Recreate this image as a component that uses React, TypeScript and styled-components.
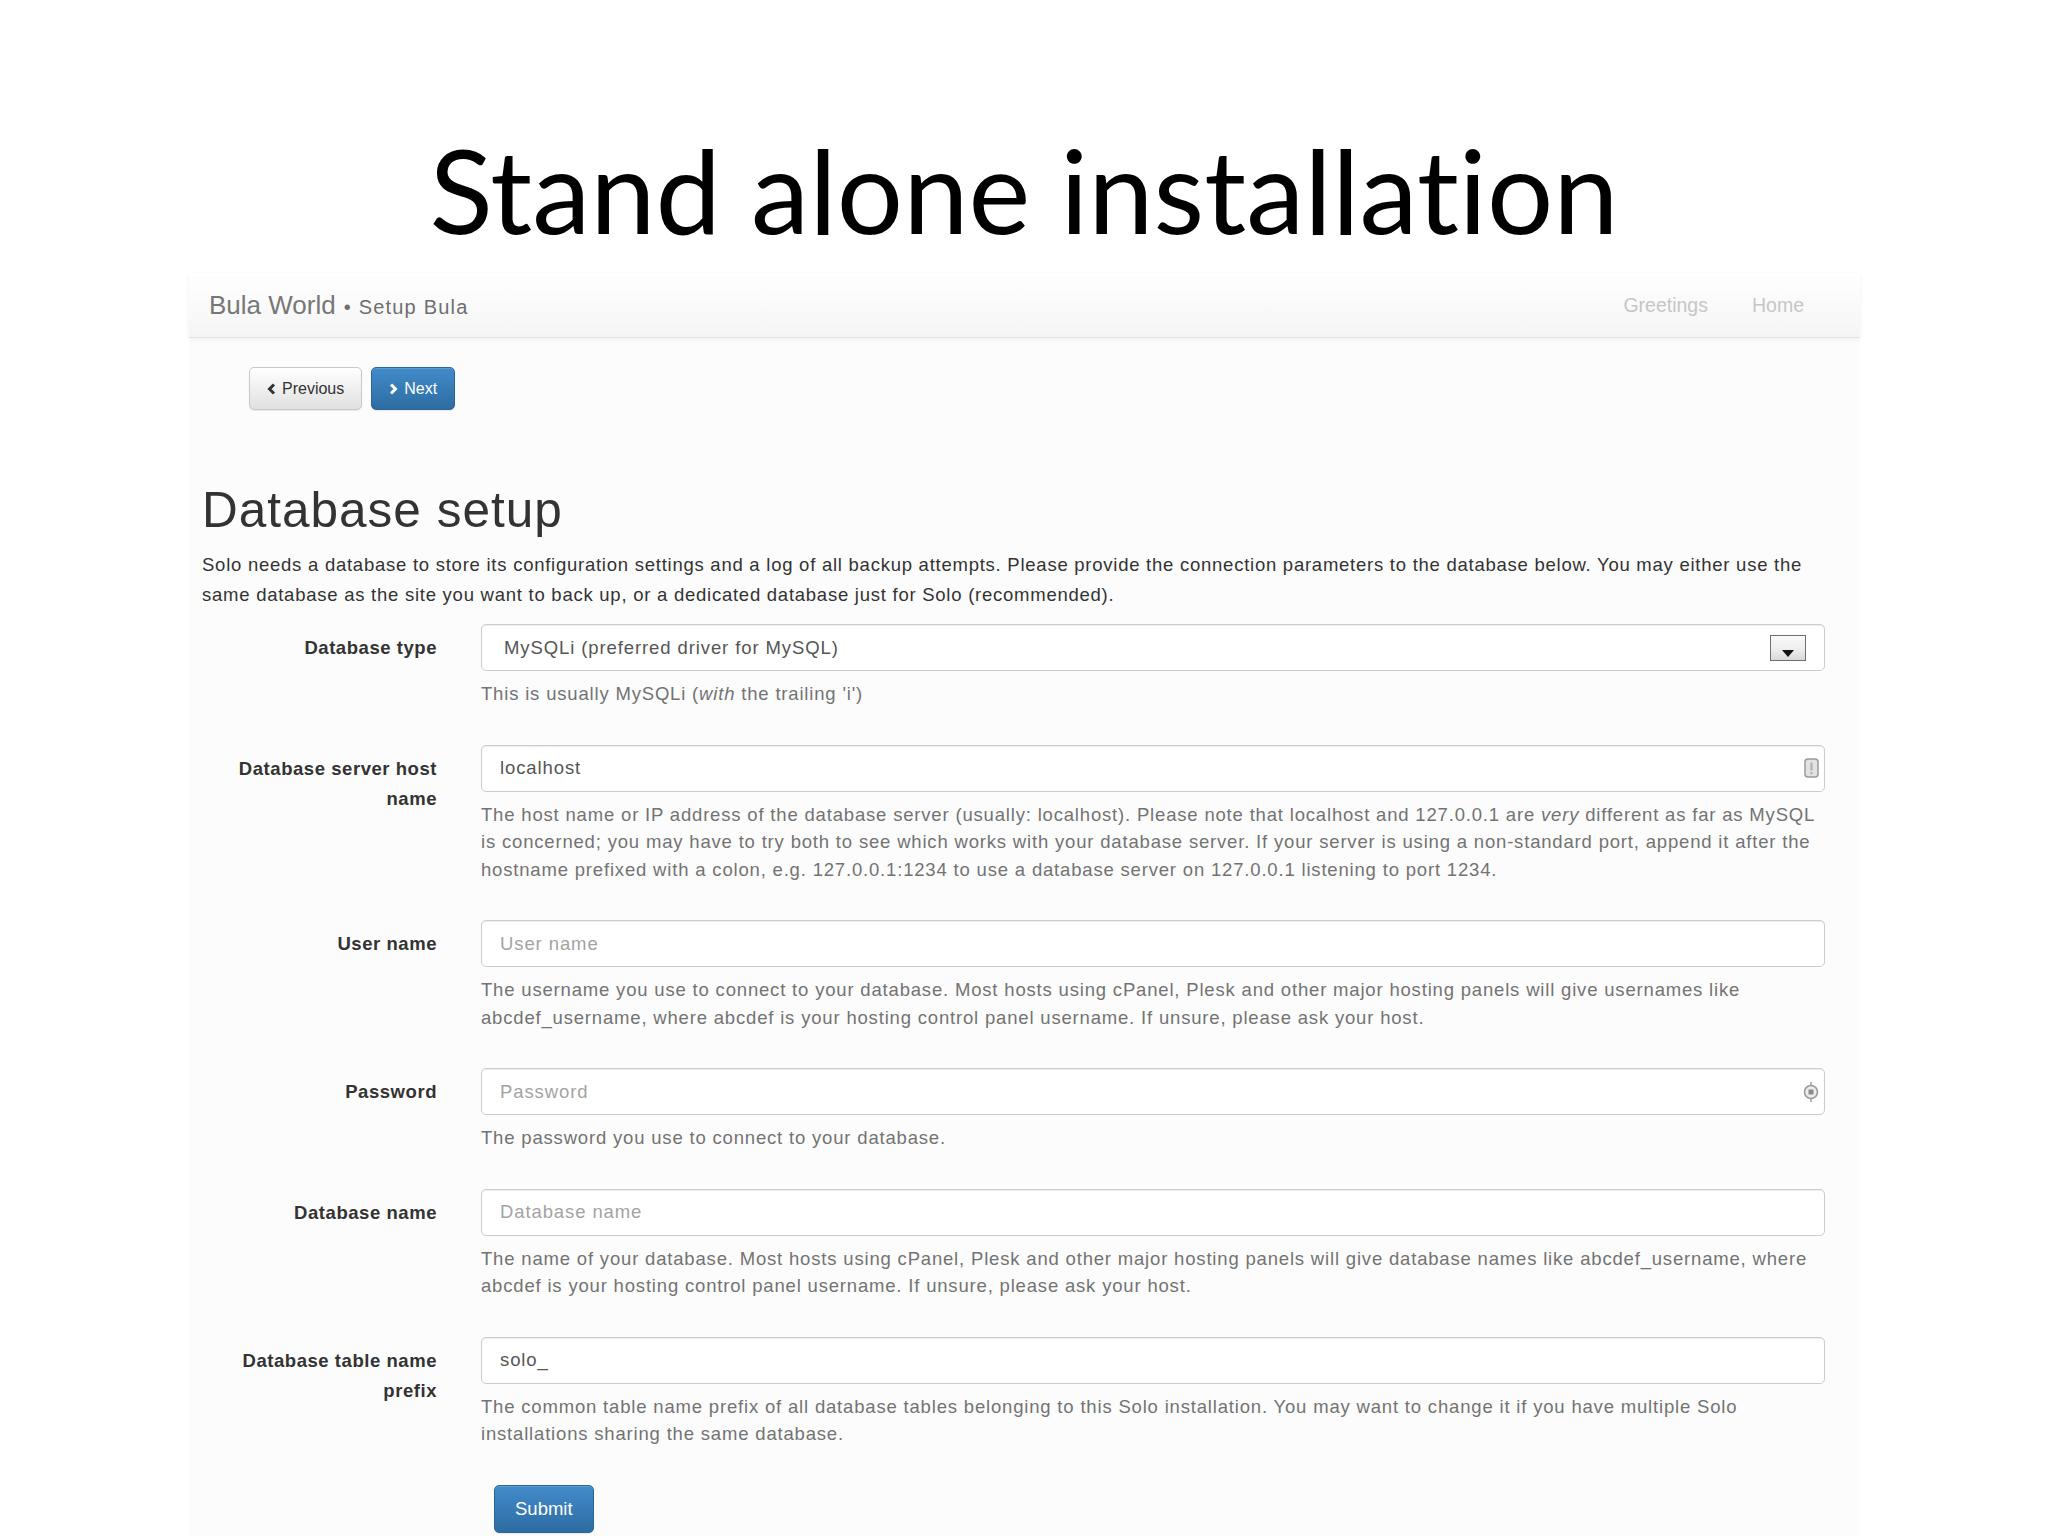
import React from 'react';
import styled, { createGlobalStyle } from 'styled-components';

const GlobalStyle = createGlobalStyle`
  html, body {
    margin: 0;
    padding: 0;
    background: #ffffff;
  }
  body {
    font-family: "Liberation Sans", Arial, sans-serif;
  }
`;

type Field = {
  label: string;
  kind: 'select' | 'text';
  value?: string;
  placeholder?: string;
  badge?: 'host' | 'key';
  help: React.ReactNode;
};

const fields: Field[] = [
  {
    label: 'Database type',
    kind: 'select',
    value: 'MySQLi (preferred driver for MySQL)',
    help: <>This is usually MySQLi (<em>with</em> the trailing 'i')</>,
  },
  {
    label: 'Database server host name',
    kind: 'text',
    value: 'localhost',
    badge: 'host',
    help: (
      <>
        The host name or IP address of the database server (usually: localhost). Please note that
        localhost and 127.0.0.1 are <em>very</em> different as far as MySQL is concerned; you may have
        to try both to see which works with your database server. If your server is using a
        non-standard port, append it after the hostname prefixed with a colon, e.g. 127.0.0.1:1234 to
        use a database server on 127.0.0.1 listening to port 1234.
      </>
    ),
  },
  {
    label: 'User name',
    kind: 'text',
    placeholder: 'User name',
    help: 'The username you use to connect to your database. Most hosts using cPanel, Plesk and other major hosting panels will give usernames like abcdef_username, where abcdef is your hosting control panel username. If unsure, please ask your host.',
  },
  {
    label: 'Password',
    kind: 'text',
    placeholder: 'Password',
    badge: 'key',
    help: 'The password you use to connect to your database.',
  },
  {
    label: 'Database name',
    kind: 'text',
    placeholder: 'Database name',
    help: 'The name of your database. Most hosts using cPanel, Plesk and other major hosting panels will give database names like abcdef_username, where abcdef is your hosting control panel username. If unsure, please ask your host.',
  },
  {
    label: 'Database table name prefix',
    kind: 'text',
    value: 'solo_',
    help: 'The common table name prefix of all database tables belonging to this Solo installation. You may want to change it if you have multiple Solo installations sharing the same database.',
  },
];

const Chevron = ({ dir }: { dir: 'left' | 'right' }) => (
  <svg width="9" height="12" viewBox="0 0 9 12">
    <polyline
      points={dir === 'left' ? '7,1.5 2.5,6 7,10.5' : '2,1.5 6.5,6 2,10.5'}
      fill="none"
      stroke="currentColor"
      strokeWidth="3"
    />
  </svg>
);

const HostIcon = () => (
  <svg width="15" height="20" viewBox="0 0 15 20">
    <rect x="1" y="1" width="13" height="18" rx="3" fill="#e2e2e2" stroke="#9a9a9a" strokeWidth="1.5" />
    <rect x="6.3" y="4.5" width="2.4" height="8" fill="#b5b5b5" />
    <rect x="6.3" y="14" width="2.4" height="2.2" fill="#b5b5b5" />
  </svg>
);

const KeyIcon = () => (
  <svg width="16" height="22" viewBox="0 0 16 22">
    <line x1="8" y1="1" x2="8" y2="4" stroke="#9a9a9a" strokeWidth="1.5" />
    <line x1="8" y1="18" x2="8" y2="21" stroke="#9a9a9a" strokeWidth="1.5" />
    <circle cx="8" cy="11" r="6.5" fill="#ececec" stroke="#9a9a9a" strokeWidth="1.6" />
    <rect x="5.5" y="8.5" width="5" height="5" fill="#8a8a8a" />
  </svg>
);

export default function App() {
  return (
    <>
      <GlobalStyle />
      <Slide>
        <SlideTitle>Stand alone installation</SlideTitle>
        <Panel>
          <Navbar>
            <Brand>
              <BrandName>Bula World</BrandName>
              <BrandSub>• Setup Bula</BrandSub>
            </Brand>
            <NavLinks>
              <NavLink>Greetings</NavLink>
              <NavLink>Home</NavLink>
            </NavLinks>
          </Navbar>

          <ButtonRow>
            <Button>
              <Chevron dir="left" />
              Previous
            </Button>
            <Button $primary>
              <Chevron dir="right" />
              Next
            </Button>
          </ButtonRow>

          <Content>
            <PageHeading>Database setup</PageHeading>
            <Intro>
              Solo needs a database to store its configuration settings and a log of all backup attempts.
              Please provide the connection parameters to the database below. You may either use the same
              database as the site you want to back up, or a dedicated database just for Solo (recommended).
            </Intro>

            {fields.map((f) => (
              <FormGroup key={f.label}>
                <Label>{f.label}</Label>
                <Control>
                  {f.kind === 'select' ? (
                    <SelectBox>
                      <span>{f.value}</span>
                      <SelectArrow />
                    </SelectBox>
                  ) : (
                    <InputWrap>
                      <TextInput readOnly defaultValue={f.value} placeholder={f.placeholder} />
                      {f.badge && <Badge>{f.badge === 'host' ? <HostIcon /> : <KeyIcon />}</Badge>}
                    </InputWrap>
                  )}
                  <Help>{f.help}</Help>
                </Control>
              </FormGroup>
            ))}

            <SubmitRow>
              <Button $primary $large>Submit</Button>
            </SubmitRow>
          </Content>
        </Panel>
      </Slide>
    </>
  );
}

const Slide = styled.div`
  width: 2048px;
  height: 1536px;
  overflow: hidden;
  background: #ffffff;
`;

const SlideTitle = styled.h1`
  margin: 0 0 25px;
  padding-top: 131px;
  font-family: Lato, "Open Sans", sans-serif;
  font-weight: 400;
  font-size: 117px;
  line-height: 117px;
  font-variant-ligatures: none;
  color: #000000;
  text-align: center;
`;

const Panel = styled.div`
  margin-left: 189px;
  width: 1671px;
  min-height: 1263px;
  background: #fcfcfc;
`;

const Navbar = styled.div`
  height: 64px;
  display: flex;
  align-items: center;
  justify-content: space-between;
  padding: 0 56px 0 20px;
  background: linear-gradient(to bottom, #ffffff 0%, #f5f5f5 100%);
  border-bottom: 1px solid #e3e3e3;
  box-shadow: 0 1px 5px rgba(0, 0, 0, 0.06);
`;

const Brand = styled.div`
  display: flex;
  align-items: baseline;
  gap: 8px;
  color: #777777;
`;

const BrandName = styled.span`
  font-size: 26px;
`;

const BrandSub = styled.span`
  font-size: 20px;
  letter-spacing: 1.2px;
  color: #6f6f6f;
`;

const NavLinks = styled.div`
  display: flex;
  gap: 44px;
`;

const NavLink = styled.span`
  font-size: 19.5px;
  color: #c6c6c6;
`;

const ButtonRow = styled.div`
  display: flex;
  gap: 9px;
  padding: 29px 0 0 60px;
`;

const Button = styled.button<{ $primary?: boolean; $large?: boolean }>`
  display: inline-flex;
  align-items: center;
  gap: 6px;
  height: ${({ $large }) => ($large ? '48px' : '43px')};
  padding: ${({ $large }) => ($large ? '0 20px' : '0 17px')};
  border-radius: 5px;
  font-family: "Liberation Sans", Arial, sans-serif;
  font-size: ${({ $large }) => ($large ? '18.5px' : '16px')};
  cursor: pointer;
  color: ${({ $primary }) => ($primary ? '#ffffff' : '#333333')};
  border: 1px solid ${({ $primary }) => ($primary ? '#2b669a' : '#c8c8c8')};
  background: ${({ $primary }) =>
    $primary
      ? 'linear-gradient(to bottom, #428bca 0%, #2d6ca2 100%)'
      : 'linear-gradient(to bottom, #ffffff 0%, #e0e0e0 100%)'};
  box-shadow: inset 0 1px 0 rgba(255, 255, 255, 0.15), 0 1px 1px rgba(0, 0, 0, 0.08);
`;

const Content = styled.div`
  padding: 0 35px 0 13px;
`;

const PageHeading = styled.h2`
  margin: 73px 0 0;
  font-size: 49.5px;
  line-height: 54px;
  letter-spacing: 1px;
  font-weight: 400;
  color: #333333;
`;

const Intro = styled.p`
  margin: 13px 0 14px;
  font-size: 18.5px;
  line-height: 30px;
  letter-spacing: 0.75px;
  color: #333333;
`;

const FormGroup = styled.div`
  display: grid;
  grid-template-columns: 235px 1fr;
  column-gap: 44px;
  margin-bottom: 37px;
`;

const Label = styled.label`
  padding-top: 9px;
  text-align: right;
  font-weight: 700;
  font-size: 18.5px;
  line-height: 30px;
  letter-spacing: 0.55px;
  color: #333333;
`;

const Control = styled.div`
  min-width: 0;
`;

const InputWrap = styled.div`
  position: relative;
`;

const fieldBox = `
  box-sizing: border-box;
  width: 100%;
  height: 47px;
  border: 1px solid #cccccc;
  border-radius: 5px;
  background: #ffffff;
  box-shadow: inset 0 1px 1px rgba(0, 0, 0, 0.075);
  font-family: "Liberation Sans", Arial, sans-serif;
  font-size: 18.5px;
  letter-spacing: 0.9px;
  color: #555555;
`;

const TextInput = styled.input`
  ${fieldBox}
  display: block;
  padding: 0 18px;
  outline: none;

  &::placeholder {
    color: #a3a3a3;
  }
`;

const SelectBox = styled.div`
  ${fieldBox}
  display: flex;
  align-items: center;
  justify-content: space-between;
  padding: 0 18px 0 22px;
`;

const SelectArrow = styled.span`
  position: relative;
  box-sizing: border-box;
  width: 36px;
  height: 26px;
  border: 1px solid #6e6e6e;
  background: linear-gradient(to bottom, #f8f8f8 0%, #f0f0f0 50%, #d9d9d9 100%);

  &::after {
    content: '';
    position: absolute;
    left: 50%;
    bottom: 3px;
    margin-left: -6px;
    border-left: 6px solid transparent;
    border-right: 6px solid transparent;
    border-top: 7px solid #111111;
  }
`;

const Badge = styled.span`
  position: absolute;
  right: 6px;
  top: 50%;
  transform: translateY(-50%);
  display: flex;
`;

const Help = styled.div`
  margin-top: 9px;
  font-size: 18.5px;
  line-height: 27.5px;
  letter-spacing: 0.82px;
  color: #737373;
`;

const SubmitRow = styled.div`
  padding-left: 292px;
`;
